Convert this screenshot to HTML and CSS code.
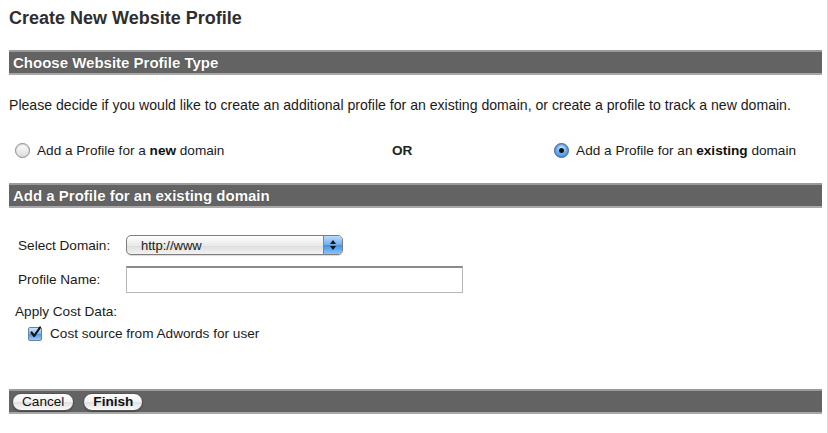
FILE: index.html
```html
<!DOCTYPE html>
<html>
<head>
<meta charset="utf-8">
<link rel="stylesheet" href="styles.css">
</head>
<body>
<div class="page">
  <h1 class="title">Create New Website Profile</h1>
  <div class="bar">Choose Website Profile Type</div>
  <p class="intro">Please decide if you would like to create an additional profile for an existing domain, or create a profile to track a new domain.</p>
  <div class="choice-row">
    <label class="choice">
      <span class="radio"></span>
      <span>Add a Profile for a <b>new</b> domain</span>
    </label>
    <span class="or">OR</span>
    <label class="choice">
      <span class="radio checked"></span>
      <span>Add a Profile for an <b>existing</b> domain</span>
    </label>
  </div>
  <div class="bar bar-existing">Add a Profile for an existing domain</div>
  <div class="form">
    <div class="field">
      <span class="label">Select Domain:</span>
      <div class="select">
        <span class="select-text">http://www</span>
        <span class="select-btn">
          <svg width="8" height="12" viewBox="0 0 8 12"><path d="M4 1 L7 5 L1 5 Z" fill="#111"/><path d="M4 11 L7 7 L1 7 Z" fill="#111"/></svg>
        </span>
      </div>
    </div>
    <div class="field field-name">
      <span class="label">Profile Name:</span>
      <div class="textbox"></div>
    </div>
    <div class="cost-title">Apply Cost Data:</div>
    <label class="check-row">
      <span class="checkbox">
        <svg width="13" height="13" viewBox="0 0 13 13"><path d="M2.5 6.5 L5.2 10 L11 1.5" fill="none" stroke="#111" stroke-width="2.2" stroke-linejoin="round" stroke-linecap="round"/></svg>
      </span>
      <span>Cost source from Adwords for user</span>
    </label>
  </div>
  <div class="bar footer-bar">
    <span class="btn">Cancel</span>
    <span class="btn">Finish</span>
  </div>
</div>
</body>
</html>
```
FILE: styles.css
```css
* { box-sizing: border-box; }
html, body { margin: 0; padding: 0; background: #fff; }
body {
  font-family: "Liberation Sans", Arial, sans-serif;
  font-size: 13.6px;
  color: #1a1a1a;
  width: 828px;
  height: 433px;
  overflow: hidden;
  border-right: 1px solid #dcdcdc;
}
.page {
  padding: 8px 5px 0 9px;
}
.title {
  margin: 0;
  font-size: 18px;
  font-weight: bold;
  color: #2e2e2e;
  line-height: 20px;
}
.bar {
  margin-top: 22px;
  height: 25px;
  background: #636363;
  border-top: 2px solid #9a9a9a;
  border-bottom: 2px solid #a8a8a8;
  color: #fff;
  font-weight: bold;
  font-size: 15px;
  line-height: 21px;
  padding-left: 4px;
  text-shadow: 0 0 1px rgba(0,0,0,0.5);
}
.bar-existing {
  margin-top: 24px;
}
.intro {
  margin: 22px 0 0 0;
  line-height: 16px;
  font-size: 14.1px;
}
.choice-row {
  display: flex;
  align-items: center;
  justify-content: space-between;
  margin-top: 28px;
  padding-left: 6px;
  padding-right: 26px;
  height: 18px;
}
.choice {
  display: flex;
  align-items: center;
  gap: 7px;
}
.choice b { color: #111; }
.or {
  font-weight: bold;
  margin-left: 26px;
  color: #222;
}
.radio {
  width: 15px;
  height: 15px;
  border-radius: 50%;
  border: 1px solid #8a8a8a;
  background: linear-gradient(#fdfdfd, #dcdcdc);
  box-shadow: inset 0 1px 1px rgba(0,0,0,0.15);
  display: inline-block;
  position: relative;
}
.radio.checked {
  border-color: #3a5f98;
  background: radial-gradient(circle at 50% 35%, #d6ecff 0%, #6fb1f0 45%, #2f7fd6 100%);
}
.radio.checked::after {
  content: "";
  position: absolute;
  left: 4px;
  top: 4px;
  width: 5px;
  height: 5px;
  border-radius: 50%;
  background: #111;
}
.form {
  padding-top: 28px;
  height: 181px;
}
.field {
  display: flex;
  align-items: center;
  padding-left: 9px;
}
.label {
  width: 108px;
}
.select {
  width: 217px;
  height: 20px;
  border: 1px solid #7d7d7d;
  border-radius: 5px;
  background: linear-gradient(#ffffff, #e8e8e8 55%, #dedede 56%, #f2f2f2);
  display: flex;
  align-items: center;
  justify-content: space-between;
  overflow: hidden;
  box-shadow: 0 1px 1px rgba(0,0,0,0.15);
  margin-top: -1px;
}
.select-text {
  padding-left: 14px;
  font-size: 13px;
}
.select-btn {
  width: 19px;
  height: 100%;
  background: linear-gradient(#bcdcfb, #6aaef0 50%, #3e92e8 51%, #8cc4f6);
  border-left: 1px solid #5c8cc4;
  display: flex;
  align-items: center;
  justify-content: center;
}
.field-name {
  margin-top: 11px;
}
.textbox {
  width: 337px;
  height: 27px;
  border: 1px solid #b8b8b8;
  border-top: 2px solid #8a8a8a;
  background: #fff;
}
.cost-title {
  margin-top: 11px;
  padding-left: 6px;
  line-height: 16px;
}
.check-row {
  display: flex;
  align-items: center;
  gap: 8px;
  margin-top: 6px;
  padding-left: 19px;
}
.checkbox {
  width: 14px;
  height: 14px;
  border: 1px solid #6b7f9e;
  border-radius: 2px;
  background: linear-gradient(#cfe6fd, #7cb7f2 50%, #4d98e8 51%, #9acbf7);
  display: inline-flex;
  align-items: center;
  justify-content: center;
}
.checkbox svg { margin-top: -3px; margin-left: 1px; overflow: visible; }
.footer-bar {
  margin-top: 0;
  display: flex;
  align-items: center;
  gap: 9px;
  padding-left: 3px;
}
.btn {
  display: inline-block;
  height: 18px;
  line-height: 16px;
  padding: 0 9px;
  border: 1px solid #555;
  border-radius: 9px;
  background: linear-gradient(#ffffff, #f2f2f2 50%, #e0e0e0 51%, #fafafa);
  color: #111;
  font-weight: normal;
  font-size: 13.6px;
  text-shadow: none;
  box-shadow: 0 1px 1px rgba(0,0,0,0.3);
}
.btn + .btn { font-weight: bold; }
```
